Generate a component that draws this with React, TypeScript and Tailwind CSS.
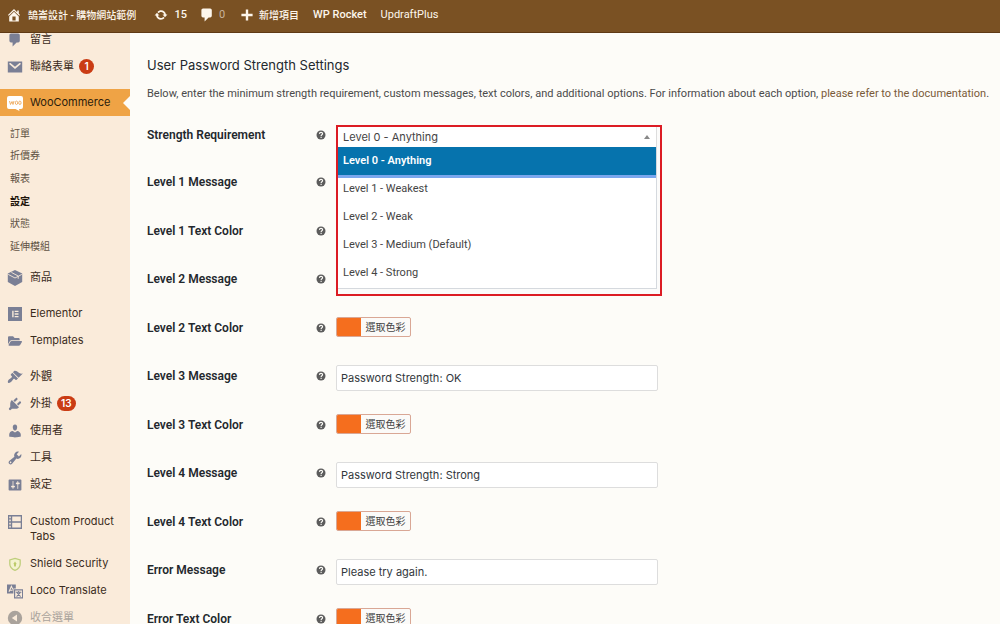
import type { ReactNode } from 'react';
import { FaFolderOpen } from 'react-icons/fa';

const dash = {
  home: 'M16 8.5l1.53 1.53-1.06 1.06L10 4.6l-6.47 6.49-1.06-1.06L10 2.5l4 4v-2h2v4zm-6-2.46l6 5.99V18H4v-5.97zM12 17v-5H8v5h4z',
  update:
    'M10.2 3.28c3.53 0 6.43 2.61 6.92 6h2.08l-3.5 4-3.5-4h2.32c-.45-1.97-2.21-3.45-4.32-3.45-1.45 0-2.73.71-3.54 1.78L4.95 5.66C6.23 4.2 8.11 3.28 10.2 3.28zm-.4 13.44c-3.52 0-6.43-2.61-6.92-6H.8l3.5-4c1.17 1.33 2.33 2.67 3.5 4H5.48c.45 1.97 2.21 3.45 4.32 3.45 1.45 0 2.73-.71 3.54-1.78l1.71 1.95c-1.28 1.46-3.15 2.38-5.25 2.38z',
  comments: 'M5 2h9c1.1 0 2 .9 2 2v7c0 1.1-.9 2-2 2h-2l-5 5v-5H5c-1.1 0-2-.9-2-2V4c0-1.1.9-2 2-2z',
  plus: 'M17 8.5v3h-5.500v5.500h-3v-5.500H3v-3h5.500V3h3v5.500z',
  mail: 'M1 3h18v14H1zM3 5v1.600L10 12.500l7-5.900V5h-1.400L10 9.600 4.400 5z',
  appearance:
    'M14.48 11.06L7.41 3.99l1.5-1.5c.5-.56 2.3-.47 3.51.32 1.21.8 1.43 1.28 2.91 2.1 1.18.64 2.45 1.26 4.45.85zm-.71.71L6.7 4.7 4.93 6.47c-.39.39-.39 1.02 0 1.41l1.06 1.06c.39.39.39 1.03 0 1.42-.6.6-1.43 1.11-2.21 1.69-.35.26-.7.53-1.01.84C1.43 14.23.4 16.08 1.4 17.07c.99 1 2.84-.03 4.18-1.36.31-.31.58-.66.85-1.02.57-.78 1.08-1.61 1.69-2.21.39-.39 1.02-.39 1.41 0l1.06 1.06c.39.39 1.02.39 1.41 0z',
  plugins:
    'M13.11 4.36L9.87 7.6 8 5.73l3.24-3.24c.35-.34 1.05-.2 1.56.32.52.51.66 1.21.31 1.55zm-8 1.77l.91-1.12 9.01 9.01-1.19.84c-.71.71-2.63 1.16-3.82 1.16H6.14L4.9 17.26c-.59.59-1.54.59-2.12 0-.59-.58-.59-1.53 0-2.12l1.24-1.24v-3.88c0-1.13.4-3.19 1.09-3.89zm7.26 3.97l3.24-3.24c.34-.35 1.04-.21 1.55.31.52.51.66 1.21.31 1.55l-3.24 3.25z',
  users:
    'M10 9.25c-2.27 0-2.73-3.44-2.73-3.44C7 4.02 7.82 2 9.97 2c2.16 0 2.98 2.02 2.71 3.81 0 0-.41 3.44-2.68 3.44zm0 2.57L12.72 10c2.39 0 4.52 2.33 4.52 4.53v2.49s-3.65 1.13-7.24 1.13c-3.65 0-7.24-1.13-7.24-1.13v-2.49c0-2.25 1.94-4.48 4.47-4.48z',
  tools:
    'M16.68 9.77c-1.34 1.34-3.3 1.67-4.95.99l-5.41 6.52c-.99.99-2.59.99-3.58 0s-.99-2.59 0-3.57l6.52-5.42c-.68-1.65-.35-3.61.99-4.95 1.28-1.28 3.12-1.62 4.72-1.06l-2.89 2.89 2.82 2.82 2.86-2.87c.53 1.58.18 3.39-1.08 4.65zM3.81 16.21c.4.39 1.04.39 1.43 0 .4-.4.4-1.04 0-1.43-.39-.4-1.03-.4-1.43 0-.39.39-.39 1.03 0 1.43z',
  settings:
    'M18 16V4c0-.55-.45-1-1-1H3c-.55 0-1 .45-1 1v12c0 .55.45 1 1 1h14c.55 0 1-.45 1-1zM8 11h1c.55 0 1 .45 1 1s-.45 1-1 1H8v1.5c0 .28-.22.5-.5.5s-.5-.22-.5-.5V13H6c-.55 0-1-.45-1-1s.45-1 1-1h1V5.5c0-.28.22-.5.5-.5s.5.22.5.5V11zm5-2h-1c-.55 0-1-.45-1-1s.45-1 1-1h1V5.5c0-.28.22-.5.5-.5s.5.22.5.5V7h1c.55 0 1 .45 1 1s-.45 1-1 1h-1v5.5c0 .28-.22.5-.5.5s-.5-.22-.5-.5V9z',
  elementor: 'M0 0h20v20H0zM6 5.500v9h2v-9zM9.500 5.500v1.800H15V5.500zM9.500 9.100v1.800H15V9.100zM9.500 12.700v1.800H15v-1.800z',
  tabs: 'M0 0h20v20H0zM1.800 2v2.500H4V2zM1.800 6.500v2.500H4V6.500zM1.800 11v2.500H4V11zM1.800 15.500v2.500H4v-2.500zM6 2v7h12.200V2zM6 11v7h12.200v-7z',
  collapse: 'M10 1a9 9 0 1 0 0 18 9 9 0 0 0 0-18zM12.500 5.500v9L6 10z',
};

function Dash({ d, className = 'size-4' }: { d: string; className?: string }) {
  return (
    <svg viewBox="0 0 20 20" className={className} fill="currentColor" fillRule="evenodd" aria-hidden="true">
      <path d={d} />
    </svg>
  );
}

function BoxIcon() {
  return (
    <svg viewBox="0 0 20 20" className="size-4" aria-hidden="true">
      <path d="M10 0l9 4.500v10.500L10 20l-9-5V4.500z" fill="currentColor" />
      <path d="M1.500 5.500L10 10l8.500-4.500M5.500 3l8.500 4.500v3.500" fill="none" stroke="#faebda" strokeWidth="1.100" />
    </svg>
  );
}

function WooIcon() {
  return (
    <svg viewBox="0 0 16 16" className="size-4" aria-hidden="true">
      <path d="M2 1h12q2 0 2 2v9q0 2-2 2h-2l.5 2-4-2H2q-2 0-2-2V3q0-2 2-2z" fill="#fff" />
      <path
        d="M2.500 6l1 3.500L5 6.500l1 3L7 6M8.300 7.800a1.200 1.700 0 1 0 2.400 0a1.200 1.700 0 1 0-2.400 0M11.700 7.800a1.200 1.700 0 1 0 2.400 0a1.200 1.700 0 1 0-2.400 0"
        fill="none"
        stroke="#f0b26c"
      />
    </svg>
  );
}

function ShieldIcon() {
  return (
    <svg viewBox="0 0 20 20" className="size-4" aria-hidden="true">
      <path d="M10 3l6.500 2v5c0 4-3 6.500-6.500 8-3.500-1.500-6.500-4-6.500-8V5z" fill="#f4f3cf" stroke="#bfce7c" strokeWidth="1.600" />
      <path d="M10 7l1.500 2-.5 4H9l-.5-4z" fill="#bccb6a" />
    </svg>
  );
}

function TranslateIcon() {
  return (
    <svg viewBox="0 0 20 20" className="size-4" aria-hidden="true">
      <path d="M0 2h11v5H8v6H0z" fill="currentColor" />
      <path d="M2.500 11L5.500 4l1.800 4M3.500 9H7" fill="none" stroke="#faebda" strokeWidth="1.300" />
      <path d="M9.500 8.500h10v10h-10z" fill="#faebda" stroke="currentColor" strokeWidth="1.500" />
      <path d="M11 11.500h7M14.500 10v1.500M12.500 12l4.500 5M16.500 12l-4.500 5" fill="none" stroke="currentColor" strokeWidth="1.300" />
    </svg>
  );
}

function MenuItem({ icon, label, badge }: { icon: ReactNode; label: string; badge?: string }) {
  return (
    <li>
      <a href="#" className="flex gap-[7px] py-1.5 pl-[7px] text-[11px] leading-[15px] text-[#3a2b1c]">
        <span className="flex h-[15px] w-4 shrink-0 items-center justify-center text-[#7a7f95]">{icon}</span>
        <span>{label}</span>
        {badge && (
          <span className="-ml-0.5 flex h-[15px] min-w-[15px] items-center justify-center rounded-full bg-[#ca3c14] px-1 text-[10px] font-semibold text-white">
            {badge}
          </span>
        )}
      </a>
    </li>
  );
}

const submenu = ['訂單', '折價券', '報表', '設定', '狀態', '延伸模組'];

function Sidebar() {
  return (
    <nav className="w-[130px] shrink-0 bg-[#faebda]" aria-label="Main menu">
      <ul className="-mt-[7px] pb-[9px]">
        <MenuItem icon={<Dash d={dash.comments} />} label="留言" />
        <MenuItem icon={<Dash d={dash.mail} />} label="聯絡表單" badge="1" />
      </ul>
      <a href="#" className="relative flex h-[27px] items-center gap-[7px] bg-[#efa345] pl-[7px] text-[11px] text-[#2b1c0c]">
        <WooIcon />
        WooCommerce
        <span className="absolute right-0 top-1/2 -translate-y-1/2 border-y-[7px] border-r-[7px] border-y-transparent border-r-[#fdfcf8]" />
      </a>
      <ul className="mt-1.5 mb-1.5 grid h-34 grid-rows-6 items-center pl-2.5 text-[10px] text-[#5f5243]">
        {submenu.map((name) => (
          <li key={name}>
            <a href="#" className={name === '設定' ? 'font-bold text-[#1d1409]' : ''}>
              {name}
            </a>
          </li>
        ))}
      </ul>
      <ul>
        <MenuItem icon={<BoxIcon />} label="商品" />
      </ul>
      <ul className="py-[9px]">
        <MenuItem icon={<Dash d={dash.elementor} className="size-3.5" />} label="Elementor" />
        <MenuItem icon={<FaFolderOpen className="size-3.5" />} label="Templates" />
      </ul>
      <ul>
        <MenuItem icon={<Dash d={dash.appearance} />} label="外觀" />
        <MenuItem icon={<Dash d={dash.plugins} />} label="外掛" badge="13" />
        <MenuItem icon={<Dash d={dash.users} />} label="使用者" />
        <MenuItem icon={<Dash d={dash.tools} />} label="工具" />
        <MenuItem icon={<Dash d={dash.settings} />} label="設定" />
      </ul>
      <ul className="pt-2.5">
        <MenuItem icon={<Dash d={dash.tabs} className="size-3.5" />} label="Custom Product Tabs" />
        <MenuItem icon={<ShieldIcon />} label="Shield Security" />
        <MenuItem icon={<TranslateIcon />} label="Loco Translate" />
      </ul>
      <button type="button" className="flex gap-[7px] py-1.5 pl-[7px] text-[11px] leading-[15px] text-[#aaa39c]">
        <Dash d={dash.collapse} />
        收合選單
      </button>
    </nav>
  );
}

function AdminBar() {
  return (
    <header className="z-10 flex h-[33px] shrink-0 items-center border-b border-[#5f3a15] bg-[#7a5123] pb-0.5 pl-1.5 font-['Roboto','Noto_Sans_CJK_TC',sans-serif] text-[11px] font-medium text-[#fdf6ec]">
      <a href="#" className="flex items-center gap-1.5 text-[10px]">
        <Dash d={dash.home} />
        鵠崙設計 - 購物網站範例
      </a>
      <a href="#" className="ml-[18px] flex items-center gap-1.5">
        <Dash d={dash.update} className="size-3.5" />
        15
      </a>
      <a href="#" className="ml-3 flex items-center gap-1">
        <Dash d={dash.comments} />
        <span className="font-normal text-[#c9b49c]">0</span>
      </a>
      <a href="#" className="ml-3.5 flex items-center gap-1 text-[10px]">
        <Dash d={dash.plus} />
        新增項目
      </a>
      <a href="#" className="ml-3.5">WP Rocket</a>
      <a href="#" className="ml-3.5 font-normal">UpdraftPlus</a>
    </header>
  );
}

function Help() {
  return (
    <svg viewBox="0 0 20 20" className="mt-1 size-2.5" role="img" aria-label="Help">
      <circle cx="10" cy="10" r="9" fill="#5c5c5c" />
      <path d="M6.800 7.800c.2-4 6.400-3.800 6.400-.4 0 2.200-3 2.200-3 4.600M10.200 13.500v2.300" fill="none" stroke="#fdfcf8" strokeWidth="2.200" />
    </svg>
  );
}

const levels = ['Level 0 - Anything', 'Level 1 - Weakest', 'Level 2 - Weak', 'Level 3 - Medium (Default)', 'Level 4 - Strong'];

function StrengthSelect() {
  return (
    <div className="absolute top-px left-0 z-10 w-[326px] border-2 border-[#dc1c24] bg-[#fbfbfa] pr-[3px] pb-[5px] text-[#444444]">
      <div className="relative border-r border-[#dddddd] bg-white">
        <select id="strength" className="block h-5 w-full appearance-none bg-transparent pl-[5px] text-[11px] leading-5 outline-none">
          <option>{levels[0]}</option>
        </select>
        <span className="absolute top-2 right-1.5 border-x-[3px] border-b-4 border-x-transparent border-b-[#888888]" />
      </div>
      <ul
        role="listbox"
        aria-label="Strength Requirement"
        className="border-r border-b border-[#d5d9de] bg-white pb-px font-['Roboto',sans-serif] text-[11px] leading-7"
      >
        {levels.map((level, i) => (
          <li
            key={level}
            role="option"
            aria-selected={i === 0}
            className={
              i === 0
                ? 'h-7 bg-[#0673ad] pl-[5px] font-semibold text-white shadow-[0_3px_0_#7aa7ee]'
                : 'pl-[5px]'
            }
          >
            {level}
          </li>
        ))}
      </ul>
    </div>
  );
}

type Field = { label: string; kind: 'select' | 'covered' | 'text' | 'color'; value?: string };

const fields: Field[] = [
  { label: 'Strength Requirement', kind: 'select' },
  { label: 'Level 1 Message', kind: 'covered' },
  { label: 'Level 1 Text Color', kind: 'covered' },
  { label: 'Level 2 Message', kind: 'covered' },
  { label: 'Level 2 Text Color', kind: 'color' },
  { label: 'Level 3 Message', kind: 'text', value: 'Password Strength: OK' },
  { label: 'Level 3 Text Color', kind: 'color' },
  { label: 'Level 4 Message', kind: 'text', value: 'Password Strength: Strong' },
  { label: 'Level 4 Text Color', kind: 'color' },
  { label: 'Error Message', kind: 'text', value: 'Please try again.' },
  { label: 'Error Text Color', kind: 'color' },
];

function FieldRow({ field, index }: { field: Field; index: number }) {
  const id = field.kind === 'select' ? 'strength' : `field-${index}`;
  return (
    <div className={index === 0 ? 'flex h-[47px]' : 'flex even:h-[49px] odd:h-12'}>
      <label
        htmlFor={id}
        className="w-[169px] pt-[3px] font-['Roboto',sans-serif] text-[12px] leading-4 font-semibold text-[#23282d]"
      >
        {field.label}
      </label>
      <div className="w-5 pt-0.5">
        <Help />
      </div>
      <div className="relative flex-1">
        {field.kind === 'select' && <StrengthSelect />}
        {field.kind === 'text' && (
          <input
            id={id}
            defaultValue={field.value}
            className="block h-[26px] w-full max-w-[322px] rounded-xs border border-[#dddddd] bg-white px-1 text-[11px] text-[#32373c] outline-none"
          />
        )}
        {field.kind === 'color' && (
          <button
            id={id}
            type="button"
            className="flex h-5 w-[75px] overflow-hidden rounded-xs border border-[#d9a795] bg-[#fbfaf8] text-[10px] leading-[18px] text-[#444444]"
          >
            <span className="w-6 self-stretch bg-[#f56e1e]" />
            <span className="flex-1 text-center">選取色彩</span>
          </button>
        )}
      </div>
    </div>
  );
}

export default function App() {
  return (
    <div className="flex h-screen flex-col overflow-hidden bg-[#fdfcf8] font-['Inter','Noto_Sans_CJK_TC',sans-serif]">
      <AdminBar />
      <div className="flex min-h-0 flex-1">
        <Sidebar />
        <main className="min-w-0 flex-1 pt-[22px] pl-[17px]">
          <h2 className="text-[13px] leading-5 text-[#23282d]">User Password Strength Settings</h2>
          <p className="mt-[11px] font-['Roboto',sans-serif] text-[11px] leading-4 whitespace-nowrap text-[#4a4a4a]">
            Below, enter the minimum strength requirement, custom messages, text colors, and additional options. For information about each
            option,{' '}
            <a href="#" className="text-[#7a5a38]">
              please refer to the documentation
            </a>
            .
          </p>
          <form className="mt-[22px]">
            {fields.map((field, i) => (
              <FieldRow key={field.label} field={field} index={i} />
            ))}
          </form>
        </main>
      </div>
    </div>
  );
}
